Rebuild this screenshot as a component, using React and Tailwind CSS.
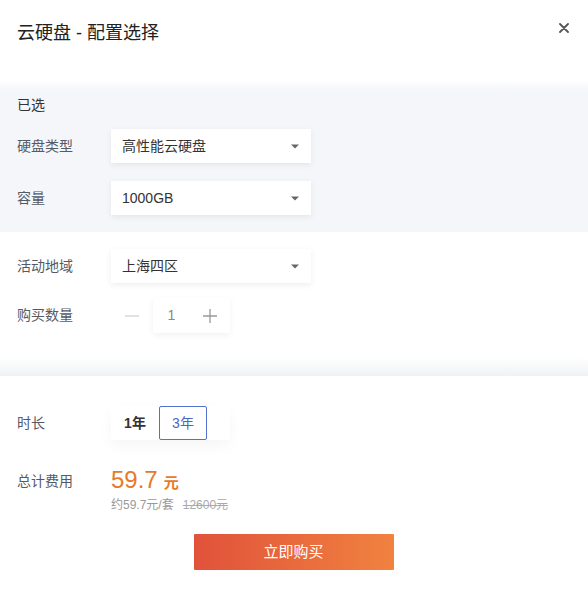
import React from "react";

const font = { fontFamily: '"Liberation Sans", "Noto Sans CJK SC", sans-serif' };

function Caret() {
  return (
    <svg width="8" height="5" viewBox="0 0 8 5" className="shrink-0">
      <path d="M0 0.5 L8 0.5 L4 4.5 Z" fill="#666" />
    </svg>
  );
}

function Select({ value }) {
  return (
    <div className="w-[200px] h-[34px] bg-white shadow-[0_2px_6px_rgba(0,0,0,0.07)] flex items-center justify-between pl-[11px] pr-[12px] text-[14px] text-[#333]">
      <span>{value}</span>
      <Caret />
    </div>
  );
}

function Row({ label, children, className = "" }) {
  return (
    <div className={"flex items-center " + className}>
      <div className="w-[94px] text-[14px] text-[#555a66] shrink-0">{label}</div>
      {children}
    </div>
  );
}

export default function App() {
  return (
    <div className="w-[588px] h-[592px] bg-white flex flex-col" style={font}>
      {/* header */}
      <div className="h-[80px] flex items-start justify-between pl-[17px] pr-[19px]">
        <div className="mt-[21px] text-[18px] leading-[24px] text-[#222]">云硬盘 - 配置选择</div>
        <svg width="10" height="10" viewBox="0 0 10 10" className="mt-[23px]">
          <path d="M1 1 L9 9 M9 1 L1 9" stroke="#555" strokeWidth="1.8" strokeLinecap="round" />
        </svg>
      </div>

      {/* gray selected section */}
      <div className="bg-[linear-gradient(to_bottom,#ffffff,#f4f6f9_10px)] pl-[17px] pt-[15px] pb-[17px]">
        <div className="text-[14px] leading-[20px] text-[#333]">已选</div>
        <Row label="硬盘类型" className="mt-[14px]">
          <Select value="高性能云硬盘" />
        </Row>
        <Row label="容量" className="mt-[18px]">
          <Select value="1000GB" />
        </Row>
      </div>

      {/* white section */}
      <div className="pl-[17px] pt-[17px] h-[126px]">
        <Row label="活动地域">
          <Select value="上海四区" />
        </Row>
        <Row label="购买数量" className="mt-[15px]">
          <div className="flex items-center h-[35px]">
            <div className="w-[42px] h-full flex items-center justify-center">
              <svg width="14" height="14" viewBox="0 0 14 14">
                <path d="M0 7 H14" stroke="#d0d3d8" strokeWidth="1.3" />
              </svg>
            </div>
            <div className="flex h-full bg-white shadow-[0_2px_6px_rgba(0,0,0,0.06)]">
              <div className="w-[37px] flex items-center justify-center text-[14px] text-[#888]">1</div>
              <div className="w-[40px] flex items-center justify-center">
                <svg width="14" height="14" viewBox="0 0 14 14">
                  <path d="M0 7 H14 M7 0 V14" stroke="#999" strokeWidth="1.3" />
                </svg>
              </div>
            </div>
          </div>
        </Row>
      </div>

      {/* gray band */}
      <div className="h-[18px] bg-[linear-gradient(to_bottom,#ffffff,#eff1f5)]" />

      {/* order section */}
      <div className="pl-[17px] pt-[30px] flex flex-col">
        <Row label="时长">
          <div className="flex h-[34px] bg-white shadow-[0_6px_14px_rgba(0,0,0,0.04)] pr-[23px]">
            <div className="w-[48px] flex items-center justify-center text-[14px] font-semibold text-[#333]">1年</div>
            <div className="w-[48px] flex items-center justify-center text-[14px] text-[#4a67c6] border-[1.5px] border-[#5571d0] rounded-[2px]">3年</div>
          </div>
        </Row>
        <div className="flex items-start mt-[25px]">
          <div className="w-[94px] mt-[6px] text-[14px] leading-[20px] text-[#555a66] shrink-0">总计费用</div>
          <div className="flex flex-col">
            <div className="flex items-baseline h-[30px] text-[#e8792b]">
              <span className="text-[24px] leading-[30px]">59.7</span>
              <span className="ml-[6px] text-[15px] font-bold">元</span>
            </div>
            <div className="mt-[2px] flex items-center text-[12px] leading-[16px] text-[#999]">
              <span>约59.7元/套</span>
              <span className="ml-[9px] line-through text-[#aaa]">12600元</span>
            </div>
          </div>
        </div>
      </div>

      <div className="flex justify-center mt-[21px] pr-[1px]">
        <button className="w-[200px] h-[36px] bg-[linear-gradient(to_right,#e1523b,#f0823f)] text-white text-[15px] rounded-[1px]">
          立即购买
        </button>
      </div>
    </div>
  );
}
